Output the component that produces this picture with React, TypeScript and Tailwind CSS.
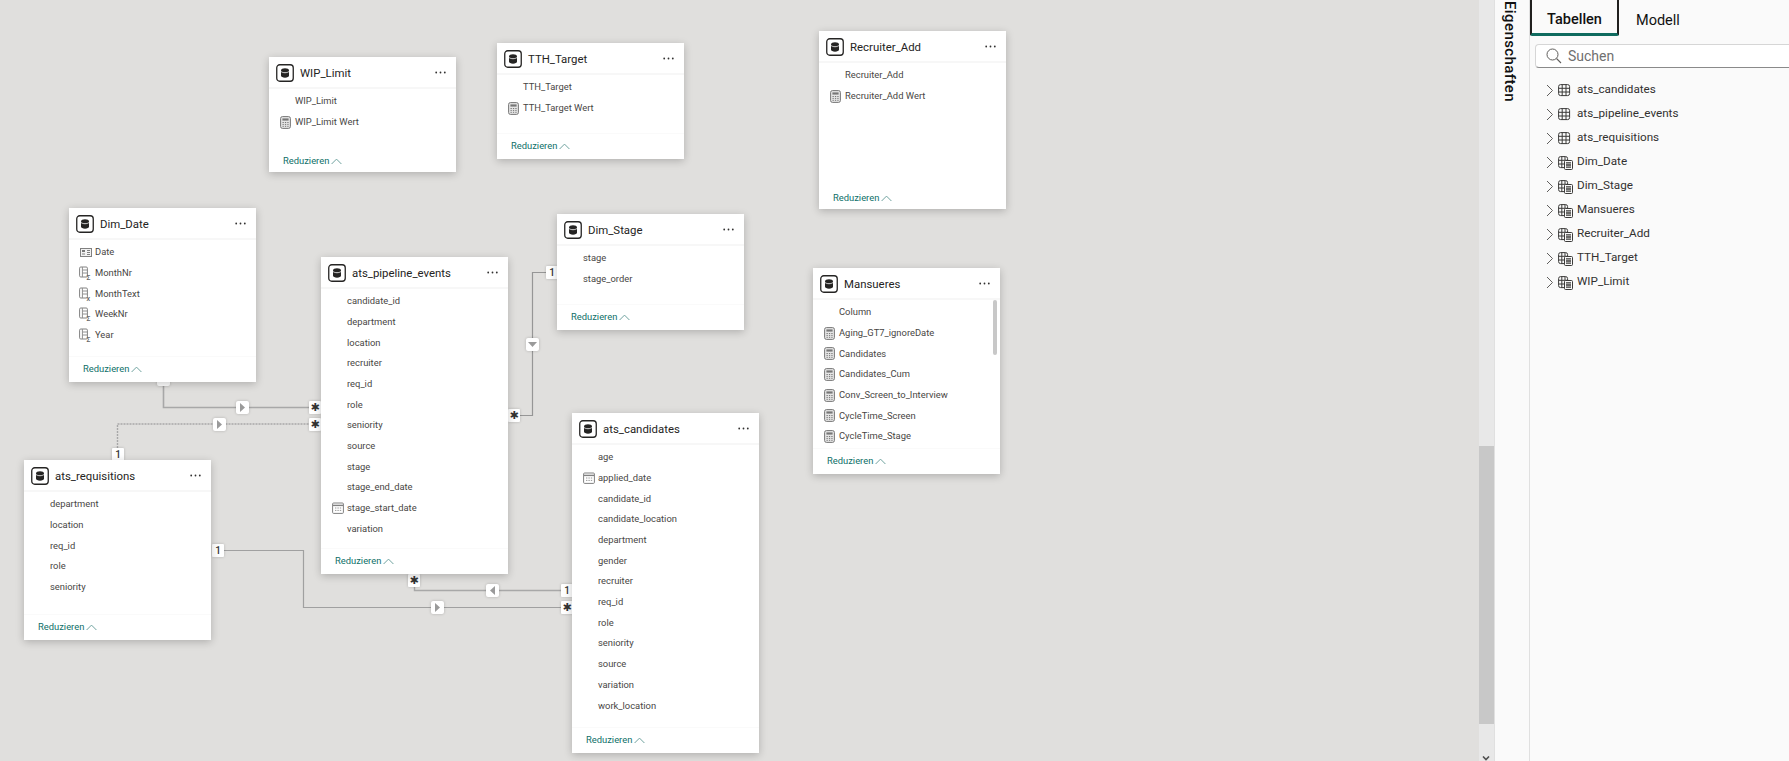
import React from "react";

const font = "font-['Roboto',sans-serif]";

type RowIcon = "none" | "calc" | "cal" | "card" | "col" | "colx";
type Row = [string, RowIcon?];

function DbIcon() {
  return (
    <svg width="18" height="18" viewBox="0 0 18 18" className="shrink-0">
      <rect x="0.750" y="0.750" width="16.500" height="16.500" rx="3" fill="#fff" stroke="#252423" strokeWidth="1.300" />
      <path d="M5 6.200c0-1.100 1.800-1.900 4-1.900s4 .8 4 1.900v5.600c0 1.100-1.800 1.900-4 1.900s-4-.8-4-1.900z" fill="#252423" />
      <path d="M5 7.400c.8.900 2.300 1.300 4 1.300s3.200-.4 4-1.300" fill="none" stroke="#fff" strokeWidth="0.800" />
    </svg>
  );
}

function Dots() {
  return (
    <svg width="11" height="3" viewBox="0 0 11 3" className="shrink-0">
      <circle cx="1.200" cy="1.500" r="0.900" fill="#323130" />
      <circle cx="5.500" cy="1.500" r="0.900" fill="#323130" />
      <circle cx="9.800" cy="1.500" r="0.900" fill="#323130" />
    </svg>
  );
}

function Glyph({ kind }: { kind: RowIcon }) {
  if (kind === "calc")
    return (
      <svg width="11" height="13" viewBox="0 0 11 13">
        <rect x="0.600" y="0.600" width="9.800" height="11.800" rx="1.800" fill="#e6e6e6" stroke="#777" strokeWidth="1" />
        <rect x="2.400" y="2.400" width="6.200" height="2.200" fill="#777" />
        <path d="M2.500 6.500h1.300M4.900 6.500h1.300M7.300 6.500h1.300M2.500 8.400h1.300M4.900 8.400h1.300M7.300 8.400h1.300M2.500 10.300h1.300M4.900 10.300h1.300M7.300 10.300h1.300" stroke="#777" strokeWidth="1" />
      </svg>
    );
  if (kind === "cal")
    return (
      <svg width="12" height="12" viewBox="0 0 12 12">
        <rect x="0.600" y="1" width="10.800" height="10.400" rx="1" fill="#fff" stroke="#808080" strokeWidth="1" />
        <path d="M1 3.400h10" stroke="#808080" strokeWidth="1.400" />
        <path d="M3 6h1.400M5.400 6h1.400M7.800 6h1.400M3 8.400h1.400M5.400 8.400h1.400M7.800 8.400h1.400" stroke="#999" strokeWidth="1" />
      </svg>
    );
  if (kind === "card")
    return (
      <svg width="12" height="9" viewBox="0 0 12 9">
        <rect x="0.500" y="0.500" width="11" height="8" fill="#f2f2f2" stroke="#808080" strokeWidth="1" />
        <rect x="2" y="2" width="3" height="2" fill="#777" />
        <path d="M2 6h3M7 2.500h3M7 4.500h3M7 6.500h3" stroke="#808080" strokeWidth="1" />
      </svg>
    );
  if (kind === "col" || kind === "colx")
    return (
      <svg width="13" height="14" viewBox="0 0 13 14">
        <rect x="0.600" y="1" width="7.800" height="10" rx="1.200" fill="none" stroke="#808080" strokeWidth="1" />
        <path d="M3.400 1v10M3.400 4h5.500M3.400 7h5.500" stroke="#909090" strokeWidth="1" />
        <text x="7.500" y="13.500" fontSize="6.500" fontWeight="700" fill="#666" fontFamily="Liberation Sans">
          {kind === "colx" ? "x" : "Σ"}
        </text>
      </svg>
    );
  return null;
}

function TableCard({ pos, title, rows, scroll, plain }: { pos: string; title: string; rows: Row[]; scroll?: boolean; plain?: boolean }) {
  return (
    <div className={`absolute flex w-[187px] flex-col bg-white shadow-[0_2px_8px_rgba(0,0,0,0.22)] ${pos}`}>
      <div className="flex h-[32px] shrink-0 items-center border-b-2 border-[#f7f7f7] pl-[7px] pr-[10px] pt-[1px]">
        <DbIcon />
        <span className="ml-[6px] flex-1 pt-[2px] text-[11.400px] leading-none text-[#252423]">{title}</span>
        <Dots />
      </div>
      <div className="relative min-h-0 flex-1 overflow-hidden pt-[2px]">
        {rows.map(([name, icon]) => (
          <div key={name} className="relative flex h-[20.7px] items-center pl-[26px] text-[9.400px] whitespace-nowrap text-[#484644]">
            <span className="absolute left-[10px] top-0 flex h-full w-[13px] items-center justify-center">
              <Glyph kind={icon ?? "none"} />
            </span>
            {name}
          </div>
        ))}
        {scroll && <div className="absolute right-[3px] top-[0px] h-[55px] w-[4px] rounded-full bg-[#c8c8c8]" />}
      </div>
      <div className={`flex h-[26px] shrink-0 items-center pl-[14px] text-[9.400px] text-[#0e6f68] ${plain ? "pt-[4px]" : "border-t border-[#fafafa]"}`}>
        Reduzieren
        <svg width="11" height="7" viewBox="0 0 11 7" className="ml-[2px]">
          <path d="M0.600 6 5.500 1.100 10.400 6" fill="none" stroke="#6fa29e" strokeWidth="1" />
        </svg>
      </div>
    </div>
  );
}

function Tag({ pos, children, star }: { pos: string; children: string; star?: boolean }) {
  return (
    <div
      className={`absolute flex h-[13px] w-[12px] items-center justify-center rounded-[1px] bg-white leading-none shadow-[0_0_3px_rgba(0,0,0,0.2)] ${star ? "font-['DejaVu_Sans',sans-serif] text-[11px] text-[#333]" : "text-[10px] font-medium text-[#333]"} ${pos}`}
    >
      {children}
    </div>
  );
}

function Arrow({ pos, dir }: { pos: string; dir: "r" | "l" | "d" }) {
  const pts = dir === "r" ? "4,2 9,6.500 4,11" : dir === "l" ? "9,2 4,6.500 9,11" : "2,4 11,4 6.500,9";
  return (
    <div className={`absolute h-[13px] w-[13px] rounded-[2px] bg-white shadow-[0_0_3px_rgba(0,0,0,0.22)] ${pos}`}>
      <svg width="13" height="13" viewBox="0 0 13 13">
        <polygon points={pts} fill="#9a9a9a" />
      </svg>
    </div>
  );
}

const r = (names: string[]): Row[] => names.map((n) => [n]);

function TabIcon({ calc }: { calc?: boolean }) {
  return (
    <svg width="16" height="15" viewBox="0 0 16 15" className="shrink-0">
      <rect x="0.600" y="1.600" width={calc ? 9 : 11} height="11" rx="2" fill="none" stroke="#3b3a39" strokeWidth="1" />
      <path d={calc ? "M3.800 1.600v11M7 1.600v4M.6 5.300h9M.6 9h6" : "M4.200 1.600v11M8 1.600v11M.6 5.300h11M.6 9h11"} stroke="#3b3a39" strokeWidth="1" fill="none" />
      {calc && (
        <>
          <rect x="6.500" y="5.500" width="8" height="9" rx="1" fill="#fafafa" stroke="#3b3a39" strokeWidth="1" />
          <path d="M8 7.800h5M8 10h5M8 12.200h5" stroke="#3b3a39" strokeWidth="1.300" />
        </>
      )}
    </svg>
  );
}

const tables: [string, boolean][] = [
  ["ats_candidates", false],
  ["ats_pipeline_events", false],
  ["ats_requisitions", false],
  ["Dim_Date", true],
  ["Dim_Stage", true],
  ["Mansueres", true],
  ["Recruiter_Add", true],
  ["TTH_Target", true],
  ["WIP_Limit", true],
];

export default function App() {
  return (
    <div className={`flex h-[761px] w-[1789px] overflow-hidden bg-[#fafafa] ${font}`}>
      <div className="relative h-full w-[1479px] shrink-0 overflow-hidden bg-[#e0dfdd]">
        <svg width="1479" height="761" className="absolute left-0 top-0" fill="none">
          <path d="M163.500 380V407.500H310" stroke="#a8a8a8" strokeWidth="1.600" />
          <path d="M117.500 448V424H310" stroke="#a8a8a8" strokeWidth="1.400" strokeDasharray="2 1" />
          <path d="M510 415.500H532.500V272.500H547" stroke="#969696" strokeWidth="1.200" />
          <path d="M222 550.500H303.500V607.500H562" stroke="#a0a0a0" strokeWidth="1.200" />
          <path d="M414.500 585V590.500H562" stroke="#a8a8a8" strokeWidth="1.400" />
        </svg>

        <div className="absolute left-[157px] top-[378px] h-[8px] w-[13px] rounded-[2px] bg-white shadow-[0_0_3px_rgba(0,0,0,0.2)]" />

        <Arrow pos="left-[236px] top-[401px]" dir="r" />
        <Arrow pos="left-[213px] top-[418px]" dir="r" />
        <Arrow pos="left-[526px] top-[338px]" dir="d" />
        <Arrow pos="left-[431px] top-[601px]" dir="r" />
        <Arrow pos="left-[486px] top-[584px]" dir="l" />

        <Tag pos="left-[309px] top-[401px]" star>✱</Tag>
        <Tag pos="left-[309px] top-[418px]" star>✱</Tag>
        <Tag pos="left-[112px] top-[448px]">1</Tag>
        <Tag pos="left-[508px] top-[409px]" star>✱</Tag>
        <Tag pos="left-[546px] top-[266px]">1</Tag>
        <Tag pos="left-[212px] top-[544px]">1</Tag>
        <Tag pos="left-[408px] top-[574px]" star>✱</Tag>
        <Tag pos="left-[561px] top-[584px]">1</Tag>
        <Tag pos="left-[561px] top-[601px]" star>✱</Tag>

        <TableCard pos="left-[269px] top-[57px] h-[115px]" plain title="WIP_Limit" rows={[["WIP_Limit"], ["WIP_Limit Wert", "calc"]]} />
        <TableCard pos="left-[497px] top-[43px] h-[116px]" title="TTH_Target" rows={[["TTH_Target"], ["TTH_Target Wert", "calc"]]} />
        <TableCard pos="left-[819px] top-[31px] h-[178px]" plain title="Recruiter_Add" rows={[["Recruiter_Add"], ["Recruiter_Add Wert", "calc"]]} />
        <TableCard
          pos="left-[69px] top-[208px] h-[174px]"
          title="Dim_Date"
          rows={[["Date", "card"], ["MonthNr", "col"], ["MonthText", "colx"], ["WeekNr", "col"], ["Year", "col"]]}
        />
        <TableCard pos="left-[557px] top-[214px] h-[116px]" title="Dim_Stage" rows={r(["stage", "stage_order"])} />
        <TableCard
          pos="left-[321px] top-[257px] h-[317px]"
          title="ats_pipeline_events"
          rows={[
            ...r(["candidate_id", "department", "location", "recruiter", "req_id", "role", "seniority", "source", "stage", "stage_end_date"]),
            ["stage_start_date", "cal"],
            ["variation"],
          ]}
        />
        <TableCard
          pos="left-[813px] top-[268px] h-[206px]"
          title="Mansueres"
          scroll
          rows={[
            ["Column"],
            ["Aging_GT7_ignoreDate", "calc"],
            ["Candidates", "calc"],
            ["Candidates_Cum", "calc"],
            ["Conv_Screen_to_Interview", "calc"],
            ["CycleTime_Screen", "calc"],
            ["CycleTime_Stage", "calc"],
          ]}
        />
        <TableCard
          pos="left-[572px] top-[413px] h-[340px]"
          title="ats_candidates"
          rows={[
            ["age"],
            ["applied_date", "cal"],
            ...r(["candidate_id", "candidate_location", "department", "gender", "recruiter", "req_id", "role", "seniority", "source", "variation", "work_location"]),
          ]}
        />
        <TableCard pos="left-[24px] top-[460px] h-[180px]" title="ats_requisitions" rows={r(["department", "location", "req_id", "role", "seniority"])} />
      </div>

      <div className="relative h-full w-[15px] shrink-0 bg-[#e8e8e8]">
        <div className="absolute left-0 top-[446px] h-[278px] w-full bg-[#c8c8c8]" />
        <svg width="8" height="5" viewBox="0 0 8 5" className="absolute bottom-[0px] left-[3px]">
          <path d="M1 0.500 4 3.500 7 0.500" fill="none" stroke="#505050" strokeWidth="1.600" />
        </svg>
      </div>

      <div className="h-full w-[35px] shrink-0 border-l border-[#e0e0e0] bg-[#fafafa]">
        <div className="ml-[5px] mt-[1px] text-[15px] font-medium leading-[20px] tracking-[0.4px] text-[#111] [writing-mode:vertical-rl]">Eigenschaften</div>
      </div>

      <div className="h-full min-w-0 flex-1 border-l border-[#e0e0e0] bg-[#fafafa]">
        <div className="flex h-[36px]">
          <div className="flex h-[36px] w-[89px] items-center justify-center rounded-b-[2px] border-x-2 border-b-[3px] border-x-[#201f1e] border-b-[#0f6b5f] bg-[#fafafa] pt-[6px] text-[14.5px] font-medium text-[#111]">
            Tabellen
          </div>
          <div className="ml-[17px] flex items-center pt-[6px] text-[14.5px] text-[#111]">Modell</div>
        </div>
        <div className="ml-[5px] mt-[8px] flex h-[24px] w-[280px] items-center rounded-[4px] border border-[#d6d6d6] border-b-[#8a8a8a] bg-white pl-[10px]">
          <svg width="16" height="16" viewBox="0 0 16 16" className="shrink-0">
            <circle cx="6.500" cy="6.500" r="5.500" fill="none" stroke="#605e5c" strokeWidth="1" />
            <path d="M10.500 10.500 15 15" stroke="#605e5c" strokeWidth="1.100" />
          </svg>
          <span className="ml-[6px] text-[14px] text-[#707070]">Suchen</span>
        </div>
        <div className="mt-[10px]">
          {tables.map(([name, calc]) => (
            <div key={name} className="flex h-[24px] items-center pl-[16px] text-[11.700px] text-[#323130]">
              <svg width="8" height="13" viewBox="0 0 8 13" className="shrink-0">
                <path d="M1 1l5.500 5.500L1 12" fill="none" stroke="#605e5c" strokeWidth="1" />
              </svg>
              <span className="ml-[4px] flex w-[19px] shrink-0">
                <TabIcon calc={calc} />
              </span>
              <span>{name}</span>
            </div>
          ))}
        </div>
      </div>
    </div>
  );
}
